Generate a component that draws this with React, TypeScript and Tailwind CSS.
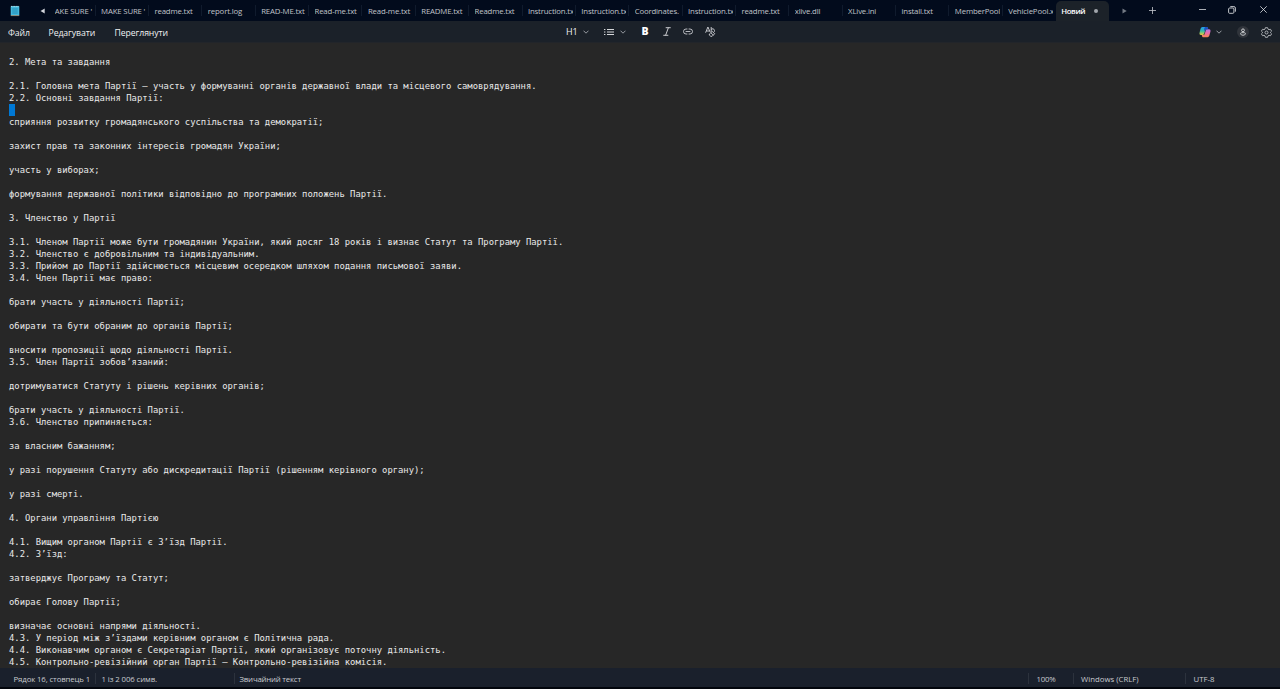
import React from 'react'

const tabs: string[] = [
  "MAKE SURE '",
  'readme.txt',
  'report.log',
  'READ-ME.txt',
  'Read-me.txt',
  'Read-me.txt',
  'README.txt',
  'Readme.txt',
  'Instruction.tx',
  'Instruction.tx',
  'Coordinates.',
  'Instruction.tx',
  'readme.txt',
  'xlive.dll',
  'XLive.ini',
  'install.txt',
  'MemberPool',
  'VehiclePool.x',
]

const SELECTED = '\u0000'

const lines: string[] = [
  '2. Мета та завдання',
  '',
  '2.1. Головна мета Партії — участь у формуванні органів державної влади та місцевого самоврядування.',
  '2.2. Основні завдання Партії:',
  SELECTED,
  'сприяння розвитку громадянського суспільства та демократії;',
  '',
  'захист прав та законних інтересів громадян України;',
  '',
  'участь у виборах;',
  '',
  'формування державної політики відповідно до програмних положень Партії.',
  '',
  '3. Членство у Партії',
  '',
  '3.1. Членом Партії може бути громадянин України, який досяг 18 років і визнає Статут та Програму Партії.',
  '3.2. Членство є добровільним та індивідуальним.',
  '3.3. Прийом до Партії здійснюється місцевим осередком шляхом подання письмової заяви.',
  '3.4. Член Партії має право:',
  '',
  'брати участь у діяльності Партії;',
  '',
  'обирати та бути обраним до органів Партії;',
  '',
  'вносити пропозиції щодо діяльності Партії.',
  '3.5. Член Партії зобов’язаний:',
  '',
  'дотримуватися Статуту і рішень керівних органів;',
  '',
  'брати участь у діяльності Партії.',
  '3.6. Членство припиняється:',
  '',
  'за власним бажанням;',
  '',
  'у разі порушення Статуту або дискредитації Партії (рішенням керівного органу);',
  '',
  'у разі смерті.',
  '',
  '4. Органи управління Партією',
  '',
  '4.1. Вищим органом Партії є З’їзд Партії.',
  '4.2. З’їзд:',
  '',
  'затверджує Програму та Статут;',
  '',
  'обирає Голову Партії;',
  '',
  'визначає основні напрями діяльності.',
  '4.3. У період між з’їздами керівним органом є Політична рада.',
  '4.4. Виконавчим органом є Секретаріат Партії, який організовує поточну діяльність.',
  '4.5. Контрольно-ревізійний орган Партії — Контрольно-ревізійна комісія.',
]

const NotepadIcon = () => (
  <svg width="10" height="12" viewBox="0 0 10 12" className="shrink-0">
    <rect x="0.7" y="1" width="8.6" height="10" rx="0.8" fill="#43b9dd" />
    <path d="M1 1.4h8" stroke="#b5dbe5" strokeWidth="1" strokeDasharray="1 0.6" />
    <path d="M2.2 4h5.6M2.2 6h5.6M2.2 8h5.6" stroke="#197fa8" strokeWidth="0.8" />
    <path d="M0.9 10.6h8.2" stroke="#9c8064" strokeWidth="0.9" />
  </svg>
)

const Chevron = () => (
  <svg width="6" height="4" viewBox="0 0 6 4" fill="none" stroke="#b7bac0" strokeWidth="0.8" className="shrink-0">
    <path d="M0.5 0.7 3 3.2 5.5 0.7" />
  </svg>
)

const ListIcon = () => (
  <svg width="10" height="8" viewBox="0 0 10 8" stroke="#d5d7da" strokeWidth="1" className="shrink-0">
    <path d="M0 1.500h1.400M3 1.500h7M0 4h1.400M3 4h7M0 6.500h1.400M3 6.500h7" />
  </svg>
)

const ItalicIcon = () => (
  <svg width="8" height="9" viewBox="0 0 8 9" fill="none" stroke="#dcdde0" strokeWidth="0.9" className="shrink-0">
    <path d="M2.7 0.7h5M0.3 8.3h5M5.4 0.7 2.6 8.3" />
  </svg>
)

const LinkIcon = () => (
  <svg width="10" height="7" viewBox="0 0 10 7" fill="none" stroke="#c9cbd0" strokeWidth="0.9" strokeLinecap="round" className="shrink-0">
    <path d="M4 1H3a2.5 2.5 0 0 0 0 5h1M6 1h1a2.5 2.5 0 0 1 0 5H6M3 3.5h4" />
  </svg>
)

const ClearFormatIcon = () => (
  <svg width="11" height="11" viewBox="0 0 11 11" fill="none" stroke="#d2d4d8" strokeWidth="0.9" strokeLinejoin="round" className="shrink-0">
    <path d="M0.6 6.7 2.9 1l2.2 5M1.4 5h3" />
    <path d="M6.2 1v4.6M6.2 3.4c.7-1 3.300-.8 3.300 1.200 0 .7-.2 1.100-.5 1.500" />
    <path d="m4.400 8 2.800-2.600 2.500 2.300-2.600 2.600H5.800L4.300 9.100zM5.800 6.700l2.500 2.400" />
  </svg>
)

const CopilotIcon = () => (
  <svg width="12" height="12" viewBox="0 0 12 12" className="shrink-0">
    <defs>
      <linearGradient id="copilotLeft" x1="0" y1="0" x2="0" y2="1">
        <stop offset="0" stopColor="#2598ec" />
        <stop offset="0.5" stopColor="#33bba6" />
        <stop offset="1" stopColor="#e9cb3a" />
      </linearGradient>
      <linearGradient id="copilotRight" x1="0" y1="0" x2="0" y2="1">
        <stop offset="0" stopColor="#a978e8" />
        <stop offset="0.5" stopColor="#ed6aa8" />
        <stop offset="1" stopColor="#f7854c" />
      </linearGradient>
    </defs>
    <path d="M3.500 1h4c.9 0 1.300.6 1.500 1.300L9.200 3.200H7.600c-.9 0-1.200.5-1.400 1.200L5.300 7.600C5 8.600 4.500 9 3.600 9H2C.4 9 .3 7.600.6 6.500l.9-3.400C1.900 1.800 2.400 1 3.500 1z" fill="url(#copilotLeft)" />
    <path d="M8.500 11.200h-4c-.9 0-1.300-.6-1.500-1.300L2.800 9h1.600c.9 0 1.200-.5 1.400-1.200l.9-3.200C7 3.600 7.500 3.200 8.400 3.200H10c1.600 0 1.700 1.400 1.400 2.500l-.9 3.400c-.4 1.300-.9 2.100-2 2.100z" fill="url(#copilotRight)" />
    <path d="M6 1h1.500c.9 0 1.300.6 1.500 1.300l.2.900H7.600c-.9 0-1.200.5-1.400 1.200L5.800 5.800 5 3z" fill="#1c50c4" />
  </svg>
)

const AccountIcon = () => (
  <span className="flex size-3 shrink-0 items-center justify-center rounded-full bg-[#30343b]">
    <svg width="6" height="8" viewBox="0 0 6 8" fill="none" stroke="#d8dadd" strokeWidth="0.9">
      <circle cx="3" cy="2.300" r="1.400" />
      <path d="M1.500 4.700h3c.6 0 .9.400.9.900 0 1-.9 1.600-2.400 1.600S.6 6.600.6 5.600c0-.5.300-.9.900-.9z" />
    </svg>
  </span>
)

const SettingsIcon = () => (
  <svg width="11" height="11" viewBox="0 0 11 11" fill="none" stroke="#b9bcc1" strokeWidth="0.9" strokeLinejoin="round" className="shrink-0">
    <path d="M4.400.7h2.200l.4 1.400 1 .6 1.500-.4 1.100 1.900-1.100 1v.6l1.100 1-1.100 1.900L8 8.300l-1 .6-.4 1.400H4.400L4 8.900l-1-.6-1.500.4L.4 6.800l1.100-1v-.6l-1.100-1 1.100-1.900 1.500.4 1-.6z" />
    <circle cx="5.500" cy="5.500" r="1.500" />
  </svg>
)

const TitleBar: React.FC = () => (
  <header className="flex h-[21px] shrink-0 bg-[#020b1c] text-[#c0c3c9]">
    <div className="flex w-[42.400px] shrink-0 items-center pl-[9.500px]">
      <NotepadIcon />
      <svg width="5" height="6" viewBox="0 0 5 6" fill="#d3d6dc" className="ml-[20px] shrink-0">
        <path d="M4.700.5v5L.5 3z" />
      </svg>
    </div>
    <div className="flex w-[53.300px] shrink-0 items-center pl-[12.400px]">
      <span className="w-[39px] overflow-hidden whitespace-nowrap">AKE SURE &apos;</span>
      <span className="ml-auto h-[11px] w-px bg-[#101b2d]" />
    </div>
    {tabs.map((title, index) => (
      <div key={index} className="flex w-[53.360px] shrink-0 items-center pl-[5.400px]">
        <span className="w-[45px] overflow-hidden whitespace-nowrap">{title}</span>
        {index < tabs.length - 1 && <span className="ml-auto h-[11px] w-px bg-[#101b2d]" />}
      </div>
    ))}
    <div className="mt-px flex w-[53px] shrink-0 items-center rounded-t-[5px] bg-[#1c2229] pb-px pl-[5px] text-white">
      <span className="w-[25px] whitespace-nowrap font-semibold tracking-[-0.350px]">Новий</span>
      <span className="ml-[7.500px] size-1 rounded-full bg-[#a2a6ac]" />
    </div>
    <div className="flex flex-1 items-center">
      <svg width="5" height="6" viewBox="0 0 5 6" fill="#727983" className="ml-[13px]">
        <path d="M.5.5v5L4.700 3z" />
      </svg>
      <svg width="7" height="7" viewBox="0 0 7 7" stroke="#c5c8ce" strokeWidth="0.8" className="ml-[22px]">
        <path d="M3.500 0v7M0 3.500h7" />
      </svg>
      <svg width="7" height="7" viewBox="0 0 7 7" stroke="#d7d9dd" strokeWidth="0.8" className="mb-[3px] ml-[43px]">
        <path d="M0 3.500h7" />
      </svg>
      <svg width="8" height="8" viewBox="0 0 8 8" fill="none" stroke="#d7d9dd" strokeWidth="0.9" className="mb-[2px] ml-[22px]">
        <rect x="0.600" y="2" width="5.300" height="5.300" rx="1" />
        <path d="M2.300.6h3.600a1.500 1.500 0 0 1 1.500 1.500v3.600" />
      </svg>
      <svg width="7" height="7" viewBox="0 0 7 7" stroke="#e2e4e7" strokeWidth="0.8" className="mb-[3px] ml-[24px]">
        <path d="m.3.3 6.400 6.400M6.700.3.3 6.700" />
      </svg>
    </div>
  </header>
)

const Toolbar: React.FC = () => (
  <div className="flex h-[22px] shrink-0 items-center border-b border-[#22252a] bg-[#1b2129] text-[#f0f1f2]">
    <nav className="flex w-[566px] shrink-0 pt-[2px] pl-2 text-[8.700px] tracking-[-0.080px]">
      <span className="w-[40.500px]">Файл</span>
      <span className="w-[66px]">Редагувати</span>
      <span>Переглянути</span>
    </nav>
    <span className="w-[17px] pt-px text-[9px] tracking-[-0.050px]">H1</span>
    <Chevron />
    <span className="ml-[15px] flex"><ListIcon /></span>
    <span className="ml-[6px] flex"><Chevron /></span>
    <span className="ml-[15.500px] w-[21px] text-[10.500px] leading-none font-extrabold text-white">B</span>
    <ItalicIcon />
    <span className="ml-[12.500px] flex"><LinkIcon /></span>
    <span className="ml-[12px] flex"><ClearFormatIcon /></span>
    <div className="ml-auto flex items-center pr-[8.500px]">
      <CopilotIcon />
      <span className="ml-[5px] flex"><Chevron /></span>
      <span className="ml-[15px] flex pt-px"><AccountIcon /></span>
      <span className="ml-[12px] flex pt-px"><SettingsIcon /></span>
    </div>
  </div>
)

const Editor: React.FC = () => (
  <main className="flex-1 overflow-hidden bg-[#272727] pt-[13px] pl-[9px] font-['DejaVu_Sans_Mono','Liberation_Mono',monospace] text-[8.860px] leading-[12px] tracking-[0.005px] text-[#e9e9e9]">
    {lines.map((line, index) => (
      <div key={index} className="h-3 whitespace-pre">
        {line === SELECTED ? <span className="block h-3 w-[6px] bg-[#0078d4]" /> : line}
      </div>
    ))}
  </main>
)

const StatusBar: React.FC = () => (
  <footer className="flex h-[21px] shrink-0 items-center border-b-2 border-[#02050c] bg-[#1a202c] pt-[2px] text-[#c9cbd0]">
    <span className="w-[82px] pl-[13.500px] whitespace-nowrap tracking-[-0.120px]">Рядок 16, стовпець 1</span>
    <span className="ml-[13px] h-[11px] w-px bg-[#2c323d]" />
    <span className="w-[138px] pl-[5.500px] tracking-[-0.100px]">1 із 2 006 симв.</span>
    <span className="h-[11px] w-px bg-[#2c323d]" />
    <span className="w-[793px] pl-[4.500px] tracking-[-0.200px]">Звичайний текст</span>
    <span className="h-[11px] w-px bg-[#2c323d]" />
    <span className="w-[44px] pl-[7.500px]">100%</span>
    <span className="h-[11px] w-px bg-[#2c323d]" />
    <span className="w-[111px] pl-[7px] tracking-[0px]">Windows (CRLF)</span>
    <span className="h-[11px] w-px bg-[#2c323d]" />
    <span className="pl-[7.500px] tracking-[0px]">UTF-8</span>
  </footer>
)

const App: React.FC = () => {
  return (
    <div className="flex h-screen w-full flex-col overflow-hidden bg-[#272727] font-['Open_Sans','Noto_Sans',sans-serif] text-[7.800px] leading-[12px] tracking-[-0.170px]">
      <TitleBar />
      <Toolbar />
      <Editor />
      <StatusBar />
    </div>
  )
}

export default App
